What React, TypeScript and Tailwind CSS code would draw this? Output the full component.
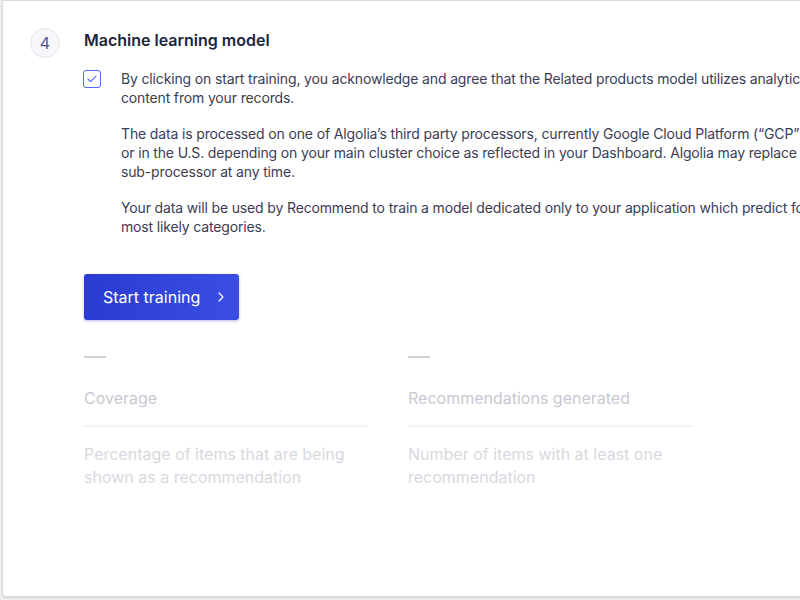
import { ChevronRight } from "lucide-react";

function Stat({ title, description }: { title: string; description: string }) {
  return (
    <div className="w-[284px]">
      <div className="h-[2px] w-[22px] bg-[#d0d0d6]"></div>
      <div className="mt-[28px] text-[16px] leading-6 text-[#c8c9d2]">{title}</div>
      <div className="mt-[15px] h-[2px] w-full bg-[#f5f5f8]"></div>
      <p className="mt-[16px] text-[16px] leading-[23px] text-[#d8d9e0]">{description}</p>
    </div>
  );
}

export default function App() {
  return (
    <div
      className="h-screen w-screen overflow-hidden bg-[#efeff1] pl-[2px] pb-[3px]"
      style={{ fontFamily: "Inter, 'Open Sans', sans-serif" }}
    >
      <div className="h-full w-[1200px] rounded-bl-[4px] border-t border-l border-b border-[#dcdce0] bg-white shadow-[0_1px_2px_rgba(0,0,0,0.12)]">
        <div className="flex gap-6 pl-[27px] pt-[27px]">
          <div className="flex h-[30px] w-[30px] shrink-0 items-center justify-center rounded-full border border-[#e3e3ec] bg-[#f7f7fb] text-[16px] text-[#4f5494]">
            4
          </div>
          <div className="flex-1">
            <h2 className="text-[16px] leading-6 font-semibold text-[#21243d]">Machine learning model</h2>

            <div className="mt-[16px] flex gap-5">
              <div className="mt-[2px] -ml-px flex h-[18px] w-[18px] shrink-0 items-center justify-center rounded-[3px] border-[1.5px] border-[#5468ff] bg-white">
                <svg width="10" height="8" viewBox="0 0 10 8" fill="none">
                  <path d="M1 4.2L3.6 6.6L9 1.2" stroke="#5468ff" strokeWidth="1.2" strokeLinecap="round" strokeLinejoin="round" />
                </svg>
              </div>
              <div className="whitespace-nowrap pt-px text-[14px] leading-[19px] tracking-[-0.15px] text-[#3a3d55]">
                <p>
                  By clicking on start training, you acknowledge and agree that the Related products model utilizes analytics and
                  <br />
                  content from your records.
                </p>
                <p className="mt-[17px]">
                  The data is processed on one of Algolia’s third party processors, currently Google Cloud Platform (“GCP”) in Europe
                  <br />
                  or in the U.S. depending on your main cluster choice as reflected in your Dashboard. Algolia may replace its
                  <br />
                  sub-processor at any time.
                </p>
                <p className="mt-[17px]">
                  Your data will be used by Recommend to train a model dedicated only to your application which predict for each item its
                  <br />
                  most likely categories.
                </p>
              </div>
            </div>

            <button className="mt-[38px] flex h-[46px] w-[155px] items-center gap-[13px] rounded-[3px] bg-gradient-to-r from-[#2a3ad2] to-[#3b4ee2] pl-[19px] text-[16px] text-white shadow-[0_1px_3px_rgba(40,50,200,0.35)]">
              Start training
              <ChevronRight size={16} strokeWidth={1.75} />
            </button>

            <div className="mt-[36px] flex gap-10">
              <Stat title="Coverage" description="Percentage of items that are being shown as a recommendation" />
              <Stat title="Recommendations generated" description="Number of items with at least one recommendation" />
            </div>
          </div>
        </div>
      </div>
    </div>
  );
}
